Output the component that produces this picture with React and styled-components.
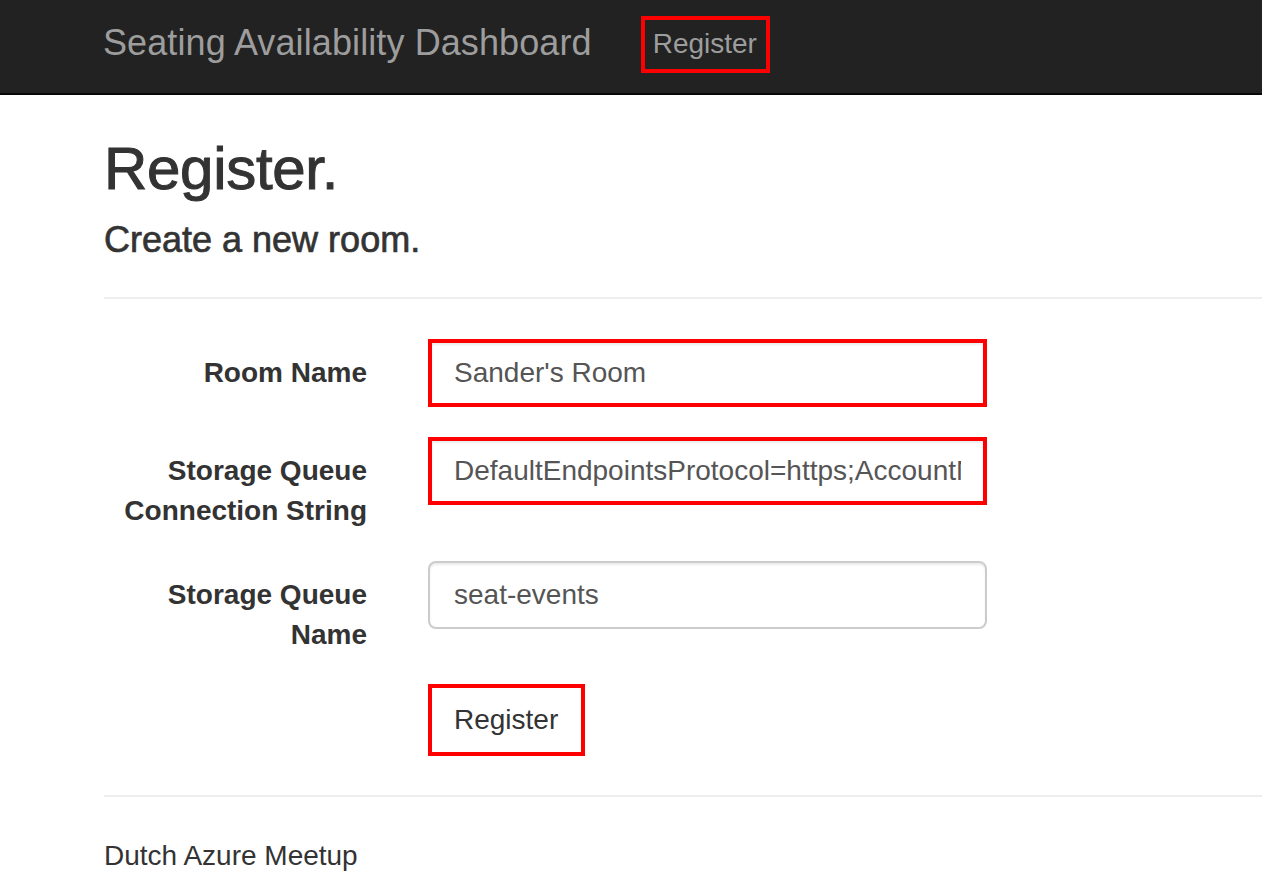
import { Fragment } from "react";
import styled, { createGlobalStyle } from "styled-components";

const GlobalStyle = createGlobalStyle`
  html, body {
    margin: 0;
    padding: 0;
    background: #fff;
  }
  body {
    font-family: "Liberation Sans", Arial, Helvetica, sans-serif;
    color: #333;
    overflow: hidden;
  }
`;

const Navbar = styled.nav`
  display: flex;
  align-items: flex-start;
  height: 93px;
  padding-left: 103px;
  background-color: #222;
  border-bottom: 2px solid #080808;
`;

const Brand = styled.a`
  margin-top: 23px;
  font-size: 36px;
  line-height: 40px;
  color: #9d9d9d;
  letter-spacing: 0.1px;
  text-decoration: none;
  white-space: nowrap;
`;

const NavLink = styled.a`
  margin-top: 16px;
  margin-left: 49px;
  padding: 4px 9px 5px 8px;
  font-size: 28px;
  line-height: 40px;
  color: #9d9d9d;
  text-decoration: none;
  border: 4px solid ${props => props.$marked ? "#ff0000" : "transparent"};
`;

const Main = styled.main`
  padding: 0 0 0 104px;
`;

const Title = styled.h2`
  margin: 41px 0 0;
  font-size: 60px;
  line-height: 66px;
  font-weight: 400;
  letter-spacing: -0.3px;
  -webkit-text-stroke: 1px #333;
`;

const Subtitle = styled.h4`
  margin: 18px 0 0;
  font-size: 36px;
  line-height: 40px;
  font-weight: 400;
  -webkit-text-stroke: 0.7px #333;
`;

const Rule = styled.hr`
  margin: ${props => props.$top}px 0 0;
  border: 0;
  border-top: 2px solid #eee;
`;

const Form = styled.form`
  display: grid;
  grid-template-columns: 263px 559px;
  column-gap: 61px;
  row-gap: 30px;
  margin-top: 40px;
`;

const Label = styled.label`
  padding-top: 14px;
  font-size: 28px;
  line-height: 40px;
  font-weight: 700;
  text-align: right;
`;

const Input = styled.input`
  box-sizing: border-box;
  width: 100%;
  height: 68px;
  margin: 0;
  padding: ${props => props.$marked ? "10px 22px" : "12px 24px"};
  font-family: inherit;
  font-size: 28px;
  line-height: 40px;
  color: #555;
  background: #fff;
  border: ${props => props.$marked ? "4px solid #ff0000" : "2px solid #ccc"};
  border-radius: ${props => props.$marked ? "0" : "8px"};
  box-shadow: inset 0 2px 2px rgba(0, 0, 0, 0.075);
  outline: none;
`;

const Actions = styled.div`
  grid-column: 2;
  margin-top: -1px;
`;

const Button = styled.button`
  padding: 12px 23px 12px 22px;
  font-family: inherit;
  font-size: 28px;
  line-height: 40px;
  color: #333;
  background: #fff;
  border: ${props => props.$marked ? "4px solid #ff0000" : "2px solid #ccc"};
  border-radius: ${props => props.$marked ? "0" : "8px"};
  cursor: pointer;
`;

const Footer = styled.footer`
  margin-top: 39px;
  font-size: 28px;
  line-height: 40px;
`;

const fields = [
  { id: "name", label: "Room Name", value: "Sander's Room", marked: true },
  {
    id: "conn",
    label: ["Storage Queue", "Connection String"],
    value: "DefaultEndpointsProtocol=https;AccountName=seating;AccountKey=",
    marked: true,
  },
  { id: "queue", label: ["Storage Queue", "Name"], value: "seat-events", marked: false },
];

const App = () => {
  return (
    <>
      <GlobalStyle />
      <Navbar>
        <Brand href="#">Seating Availability Dashboard</Brand>
        <NavLink href="#" $marked>Register</NavLink>
      </Navbar>
      <Main>
        <Title>Register.</Title>
        <Subtitle>Create a new room.</Subtitle>
        <Rule $top={37} />
        <Form onSubmit={e => e.preventDefault()}>
          {fields.map(f => (
            <Fragment key={f.id}>
              <Label htmlFor={f.id}>
                {Array.isArray(f.label) ? f.label.map(l => <div key={l}>{l}</div>) : f.label}
              </Label>
              <div>
                <Input id={f.id} defaultValue={f.value} $marked={f.marked} />
              </div>
            </Fragment>
          ))}
          <Actions>
            <Button type="submit" $marked>Register</Button>
          </Actions>
        </Form>
        <Rule $top={39} />
        <Footer>Dutch Azure Meetup</Footer>
      </Main>
    </>
  );
};

export default App;
